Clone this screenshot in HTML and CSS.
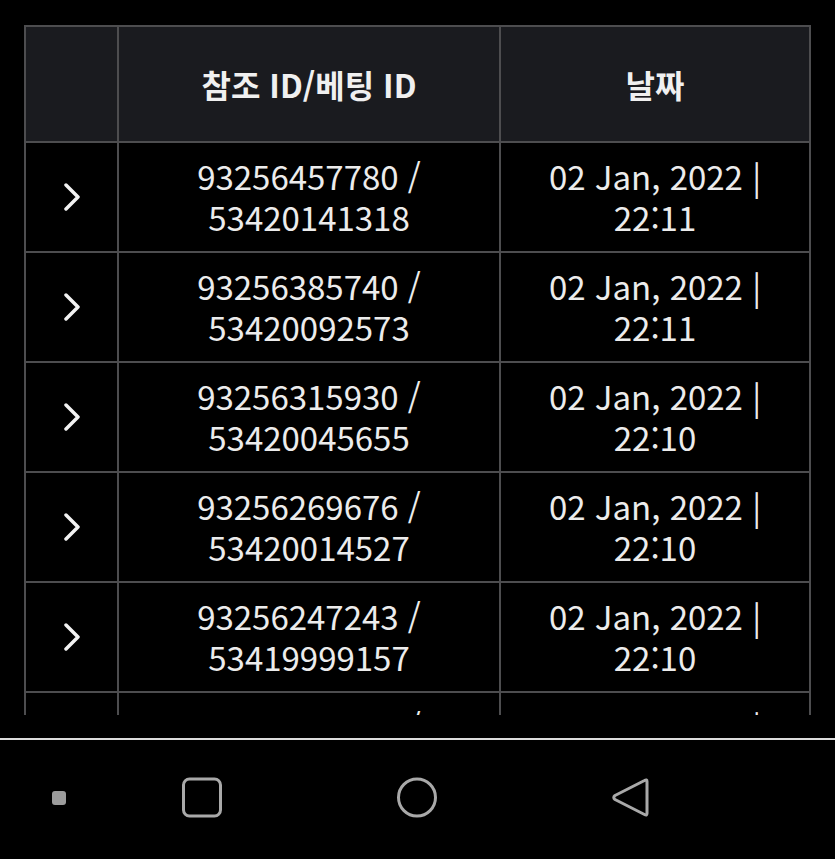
FILE: index.html
```html
<!DOCTYPE html>
<html lang="ko">
<head>
  <meta charset="UTF-8" />
  <meta name="viewport" content="width=device-width, initial-scale=1.0"/>
  <title>베팅 내역</title>
  <link rel="stylesheet" href="styles.css">
</head>
<body>
  <div class="screen">
    <div class="table-wrap">
      <table class="history">
        <thead>
          <tr>
            <th class="col-arrow"></th>
            <th class="col-id">참조 ID/베팅 ID</th>
            <th class="col-date">날짜</th>
          </tr>
        </thead>
        <tbody>
          <tr>
            <td class="arrow"><svg viewBox="0 0 16 28" width="16" height="28"><path d="M2 2 L14 14 L2 26" /></svg></td>
            <td>93256457780 /<br>53420141318</td>
            <td>02 Jan, 2022 |<br>22:11</td>
          </tr>
          <tr>
            <td class="arrow"><svg viewBox="0 0 16 28" width="16" height="28"><path d="M2 2 L14 14 L2 26" /></svg></td>
            <td>93256385740 /<br>53420092573</td>
            <td>02 Jan, 2022 |<br>22:11</td>
          </tr>
          <tr>
            <td class="arrow"><svg viewBox="0 0 16 28" width="16" height="28"><path d="M2 2 L14 14 L2 26" /></svg></td>
            <td>93256315930 /<br>53420045655</td>
            <td>02 Jan, 2022 |<br>22:10</td>
          </tr>
          <tr>
            <td class="arrow"><svg viewBox="0 0 16 28" width="16" height="28"><path d="M2 2 L14 14 L2 26" /></svg></td>
            <td>93256269676 /<br>53420014527</td>
            <td>02 Jan, 2022 |<br>22:10</td>
          </tr>
          <tr>
            <td class="arrow"><svg viewBox="0 0 16 28" width="16" height="28"><path d="M2 2 L14 14 L2 26" /></svg></td>
            <td>93256247243 /<br>53419999157</td>
            <td>02 Jan, 2022 |<br>22:10</td>
          </tr>
          <tr>
            <td class="arrow"><svg viewBox="0 0 16 28" width="16" height="28"><path d="M2 2 L14 14 L2 26" /></svg></td>
            <td>93256185210 /<br>53419958812</td>
            <td>02 Jan, 2022 |<br>22:09</td>
          </tr>
        </tbody>
      </table>
    </div>

    <div class="nav-bar">
      <div class="nav-dot"></div>
      <svg class="nav-icon" viewBox="0 0 42 42" width="42" height="42"><rect x="2.5" y="2" width="37" height="37" rx="6" /></svg>
      <svg class="nav-icon" viewBox="0 0 42 42" width="42" height="42"><circle cx="21" cy="20.5" r="18.5" /></svg>
      <svg class="nav-icon" viewBox="0 0 42 42" width="42" height="42"><path d="M37 4.5 Q37 2 34.5 3.5 L5 18.5 Q2.5 20.5 5 22.5 L34.5 37.5 Q37 39 37 36.5 Z" /></svg>
    </div>
  </div>
</body>
</html>
```

FILE: styles.css
```css
* {
  box-sizing: border-box;
}

body {
  margin: 0;
  background: #000;
  font-family: "Noto Sans CJK KR", "Noto Sans", sans-serif;
  color: #ececec;
}

.screen {
  width: 835px;
  height: 859px;
  display: flex;
  flex-direction: column;
}

.table-wrap {
  height: 715px;
  padding: 25px 24px 0 24px;
  overflow: hidden;
  flex-shrink: 0;
}

.history {
  width: 787px;
  border-collapse: collapse;
  table-layout: fixed;
}

.history th,
.history td {
  border: 2px solid #4d4d4f;
  text-align: center;
  vertical-align: middle;
  padding: 0;
}

.history th {
  background: #1a1b1f;
  height: 116px;
  font-size: 32px;
  font-weight: 700;
  color: #f0f0f0;
}

.col-arrow {
  width: 93px;
}

.col-id {
  width: 382px;
}

.history td {
  height: 110px;
  font-size: 33px;
  line-height: 41px;
}

.arrow svg {
  display: block;
  margin: 0 auto;
}

.arrow path {
  fill: none;
  stroke: #f2f2f2;
  stroke-width: 3.5;
  stroke-linecap: round;
  stroke-linejoin: round;
}

.nav-bar {
  border-top: 2px solid #dcdcdc;
  margin-top: 23px;
  flex: 1;
  display: flex;
  align-items: center;
  padding: 0 0 4px 0;
}

.nav-dot {
  width: 14px;
  height: 14px;
  border-radius: 3px;
  background: #9c9c9c;
  margin-left: 52px;
}

.nav-icon {
  fill: none;
  stroke: #a9a9a9;
  stroke-width: 3;
  stroke-linejoin: round;
}

.nav-icon:nth-of-type(1) {
  margin-left: 115px;
}

.nav-icon:nth-of-type(2) {
  margin-left: 173px;
}

.nav-icon:nth-of-type(3) {
  margin-left: 172px;
}
```
